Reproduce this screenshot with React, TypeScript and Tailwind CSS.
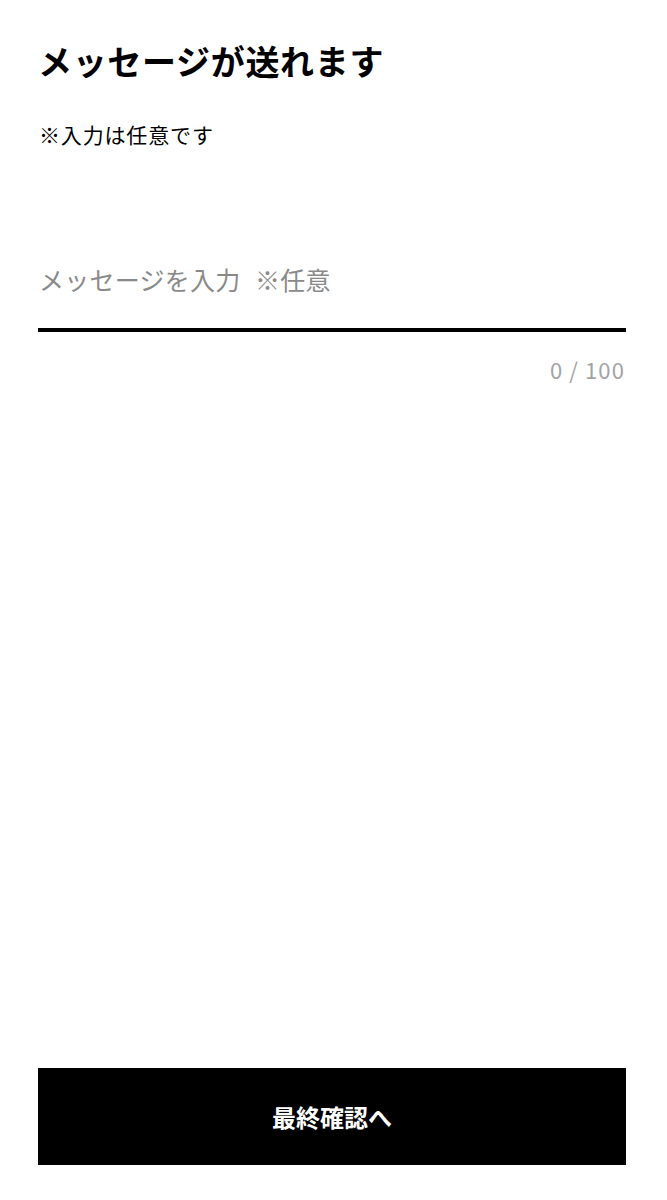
import React, { useState } from "react";

export default function App() {
  const [msg, setMsg] = useState("");
  return (
    <div
      className="min-h-[1200px] flex flex-col bg-white pl-[38px] pr-[41px] pb-[35px]"
      style={{ fontFamily: '"Noto Sans CJK JP", "Noto Sans", sans-serif' }}
    >
      <h1 className="mt-[41px] text-[34px] leading-[40px] font-bold tracking-[0.02em] text-black">
        メッセージが送れます
      </h1>
      <p className="mt-[39px] text-[21px] leading-[28px] tracking-[0.04em] text-black pl-[1px]">
        ※入力は任意です
      </p>
      <div className="mt-[113px] border-b-[4px] border-black pb-[31px]">
        <input
          value={msg}
          onChange={(e) => setMsg(e.target.value)}
          maxLength={100}
          placeholder={"メッセージを入力\u2002\u200A※任意"}
          className="w-full text-[25px] leading-[36px] tracking-[0.01em] text-black placeholder:text-[#8a8a8a] outline-none bg-transparent pl-[1px]"
        />
      </div>
      <div className="mt-[22px] text-right text-[22px] leading-[30px] tracking-[0.05em] text-[#a3a3a3] pr-[1px]">
        {msg.length} / 100
      </div>
      <button className="mt-auto h-[97px] w-full bg-black text-white text-[24px] font-bold">
        最終確認へ
      </button>
    </div>
  );
}
